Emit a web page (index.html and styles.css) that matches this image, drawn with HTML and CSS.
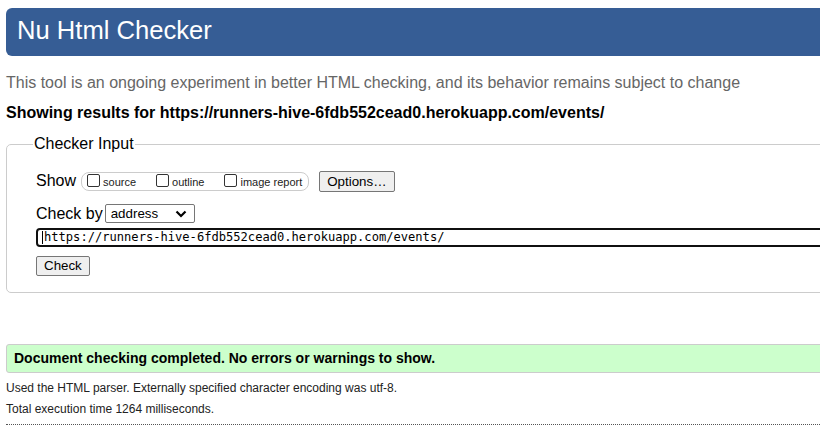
FILE: index.html
```html
<!DOCTYPE html>
<html lang="en">
<head>
<meta charset="utf-8">
<title>Nu Html Checker</title>
<link rel="stylesheet" href="styles.css">
</head>
<body>
<div class="page">
  <h1 class="banner">Nu Html Checker</h1>
  <p class="tagline">This tool is an ongoing experiment in better HTML checking, and its behavior remains subject to change</p>
  <p class="showing">Showing results for https://runners-hive-6fdb552cead0.herokuapp.com/events/</p>
  <fieldset class="checker">
    <legend class="legend">Checker Input</legend>
    <div class="row show-row">
      <span class="row-label">Show</span>
      <div class="opts">
        <label class="opt"><span class="box"></span>source</label>
        <label class="opt"><span class="box"></span>outline</label>
        <label class="opt"><span class="box"></span>image report</label>
      </div>
      <span class="btn options">Options…</span>
    </div>
    <div class="row by-row">
      <span class="row-label">Check by</span>
      <div class="select"><span>address</span>
        <svg class="chev" width="12" height="8" viewBox="0 0 12 8"><path d="M1.5 1.5 L6 6 L10.5 1.5" fill="none" stroke="#000" stroke-width="2.2"/></svg>
      </div>
    </div>
    <div class="url"><span class="caret"></span>https://runners-hive-6fdb552cead0.herokuapp.com/events/</div>
    <span class="btn check">Check</span>
  </fieldset>
  <p class="success">Document checking completed. No errors or warnings to show.</p>
  <p class="details">Used the HTML parser. Externally specified character encoding was utf-8.</p>
  <p class="details">Total execution time 1264 milliseconds.</p>
  <div class="rule"></div>
</div>
</body>
</html>
```
FILE: styles.css
```css
html, body {
  margin: 0;
  padding: 0;
  background: #fff;
  overflow: hidden;
}
body {
  font-family: "Liberation Sans", Arial, sans-serif;
  color: #000;
  padding: 8px 0 0 6px;
}
.page {
  width: 1000px;
}
.banner {
  margin: 0;
  height: 48px;
  line-height: 45px;
  font-size: 25.6px;
  font-weight: normal;
  color: #fff;
  background: #365d95;
  border-radius: 6px 0 0 6px;
  padding-left: 11px;
}
.tagline {
  margin: 18px 0 0;
  font-size: 16px;
  line-height: 18px;
  color: #666;
}
.showing {
  margin: 12px 0 0;
  font-size: 16px;
  line-height: 18px;
  font-weight: bold;
}
.checker {
  margin: 13px 0 0;
  border: 1px solid #ccc;
  border-radius: 5px;
  padding: 17px 0 16px 29px;
  min-width: 0;
}
.legend {
  padding: 0 1px;
  margin-left: -3px;
  font-size: 16px;
  line-height: 18px;
}
.row {
  display: flex;
  align-items: center;
}
.row-label {
  font-size: 16px;
  line-height: 18px;
}
.show-row {
  height: 22px;
}
.opts {
  display: flex;
  align-items: center;
  margin-left: 5px;
  height: 17px;
  border: 1px solid #ccc;
  border-radius: 8px;
  padding: 0 6px 0 5px;
  gap: 20px;
}
.opt {
  display: flex;
  align-items: center;
  font-size: 11px;
  color: #222;
  line-height: 13px;
  padding-top: 2px;
}
.box {
  width: 11px;
  height: 11px;
  border: 1px solid #333;
  border-radius: 2px;
  margin: -3px 3px 0 0;
  background: #fff;
}
.btn {
  display: inline-block;
  font-size: 13.33px;
  line-height: 16px;
  background: #efefef;
  border: 1px solid #767676;
  border-radius: 2px;
  color: #000;
}
.options {
  margin-left: 10px;
  padding: 2px 7px 1px;
}
.by-row {
  margin-top: 12px;
  height: 19px;
}
.select {
  display: flex;
  align-items: center;
  justify-content: space-between;
  margin-left: 2px;
  height: 17px;
  border: 1px solid #767676;
  border-radius: 2px;
  padding: 0 7px 0 5px;
  box-sizing: content-box;
  width: 76px;
  font-size: 13.33px;
}
.chev {
  display: block;
}
.url {
  margin-top: 5px;
  height: 15px;
  border: 2px solid #101010;
  border-radius: 4px;
  padding: 0 0 0 4px;
  font-family: "DejaVu Sans Mono", "Liberation Mono", monospace;
  font-size: 12.1px;
  line-height: 15px;
  color: #000;
  display: flex;
  align-items: center;
}
.caret {
  display: inline-block;
  width: 1px;
  height: 13px;
  background: #000;
  margin-right: 1px;
}
.check {
  margin-top: 9px;
  padding: 1px 7px 1px;
  line-height: 16px;
}
.success {
  margin: 51px 0 0;
  height: 27px;
  line-height: 27px;
  background: #ccffcc;
  border: 1px solid #ccc;
  border-radius: 3px 0 0 3px;
  padding-left: 7px;
  font-size: 14px;
  font-weight: bold;
}
.details {
  margin: 8px 0 0;
  font-size: 12px;
  line-height: 14px;
  color: #222;
}
.details + .details {
  margin-top: 7px;
}
.rule {
  margin-top: 8px;
  border-top: 1px dotted #555;
}
```
